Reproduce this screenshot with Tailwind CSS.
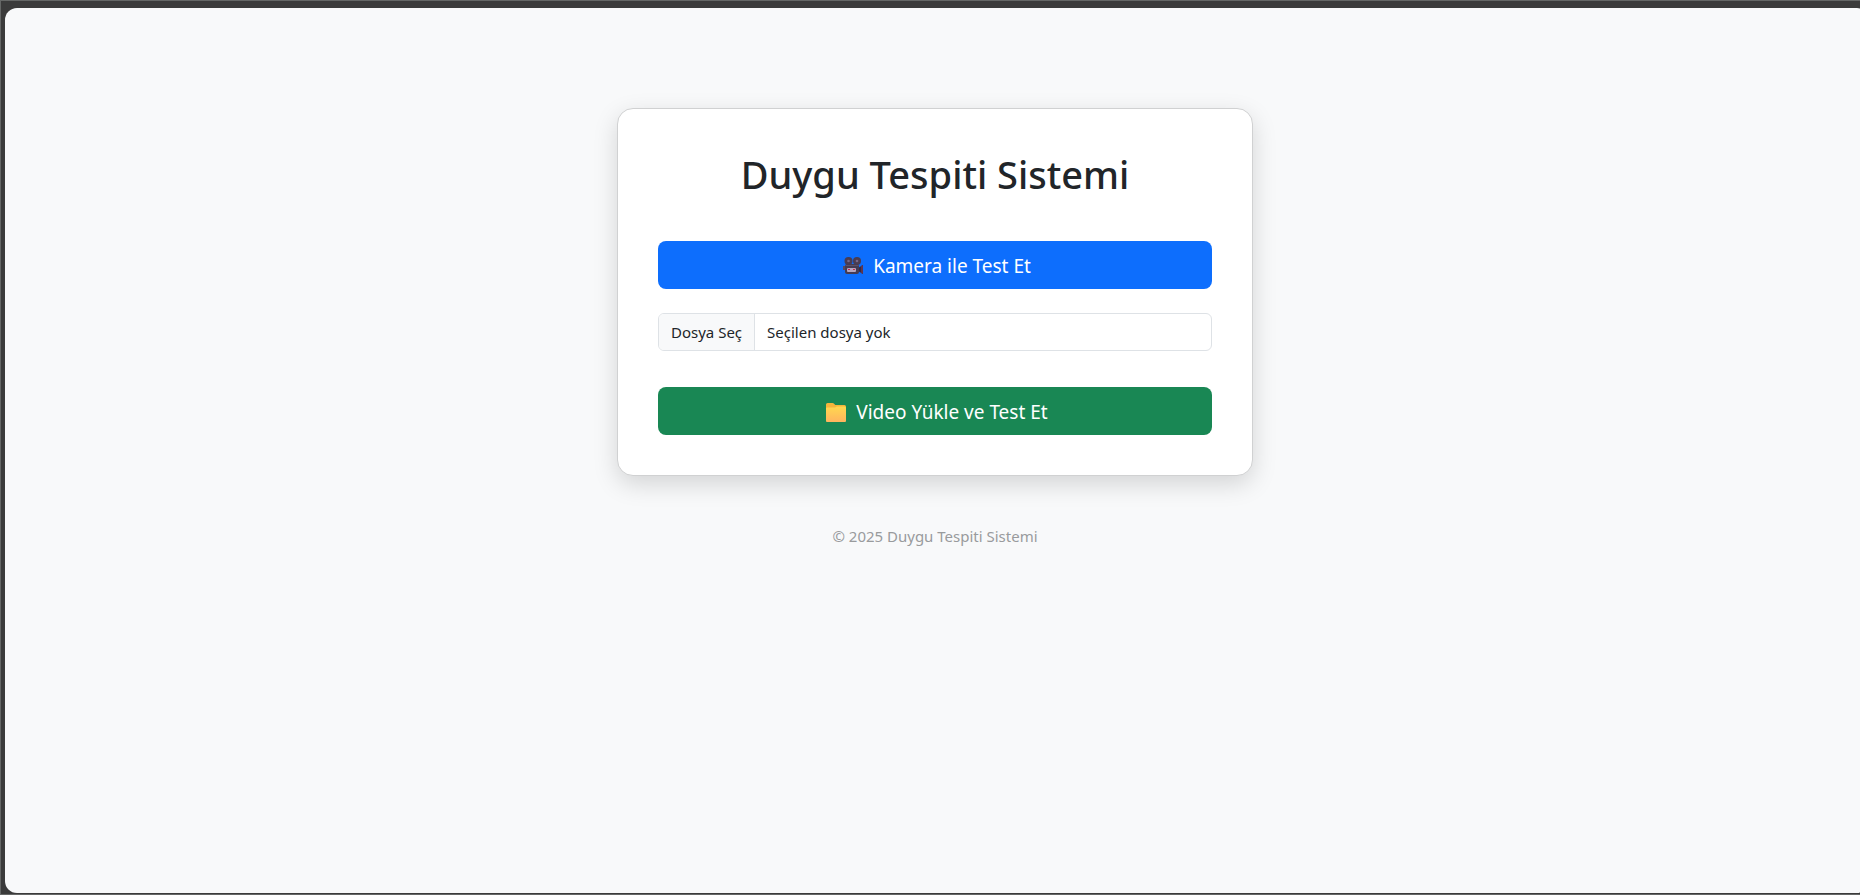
<!DOCTYPE html>
<html lang="tr">
<head>
<meta charset="utf-8">
<meta name="viewport" content="width=device-width, initial-scale=1">
<title>Duygu Tespiti Sistemi</title>
<script src="https://cdn.jsdelivr.net/npm/@tailwindcss/browser@4"></script>
</head>
<body class="flex h-screen overflow-hidden border-t border-b border-l border-[#656766] bg-[#3b3b3b] pt-[7px] pb-px pl-1 font-['Segoe_UI','Noto_Sans','Open_Sans',sans-serif] text-[#212529]">
  <div class="-mr-[5px] flex flex-1 flex-col items-center rounded-l-xl rounded-r-lg bg-[#f8f9fa] px-3 pt-[100px]">
    <main class="w-full max-w-[636px] rounded-2xl border border-[#d0d1d2] bg-white px-10 pt-[41px] pb-10 shadow-[0_8px_24px_rgba(0,0,0,0.15)]">
      <h1 class="mb-[43px] text-center text-[38px] leading-[48px] font-medium">Duygu Tespiti Sistemi</h1>
      <button type="button" class="flex h-12 w-full items-center justify-center gap-2 rounded-lg bg-[#0d6efd] pt-0.5 pl-0.5 text-[19px] text-white">
        <svg class="h-6 w-6" viewBox="0 0 24 24" aria-hidden="true">
          <circle cx="7.500" cy="7" r="4" fill="#493c52"/><circle cx="16" cy="7" r="4" fill="#493c52"/>
          <circle cx="7.500" cy="7" r="1.300" fill="#75688a"/><circle cx="16" cy="7" r="1.300" fill="#75688a"/>
          <path d="M2 12h3v4H2z" fill="#554a63"/>
          <path d="M17 14l5-3v9l-5-3z" fill="#352b42"/><path d="M20 12l2-1v9l-2-1z" fill="#5d3550"/>
          <rect x="4" y="10" width="14" height="10" rx="2" fill="#453b52"/>
          <path d="M4.500 11.500h13" stroke="#5c5068"/>
          <rect x="6" y="14" width="9" height="4" rx="1" fill="#b5a5bd"/>
          <path d="M7 15h2v1H7zM12 15h2v1h-2z" fill="#c72c4c"/>
        </svg>
        <span>Kamera ile Test Et</span>
      </button>
      <form class="mt-6">
        <label class="flex h-[38px] w-full overflow-hidden rounded-md border border-[#dee2e6] text-[15px] leading-9">
          <input type="file" accept="video/*" class="sr-only">
          <span class="border-r border-[#dee2e6] bg-[#f8f9fa] px-3">Dosya Seç</span>
          <span class="px-3">Seçilen dosya yok</span>
        </label>
        <button type="submit" class="mt-9 flex h-12 w-full items-center justify-center gap-2 rounded-lg bg-[#198754] pt-0.5 pl-0.5 text-[19px] text-white">
          <svg class="h-6 w-6" viewBox="0 0 24 24" aria-hidden="true">
            <defs><linearGradient id="folder" x1="0" y1="0" x2="0" y2="1"><stop offset="0" stop-color="#ffd84f"/><stop offset="1" stop-color="#ffb45f"/></linearGradient></defs>
            <path d="M2 4.500q0-1.500 1.500-1.500h5q1 0 1.800 1l1 1H20.500q1.500 0 1.500 1.500v4H2z" fill="#f5b53c"/>
            <path d="M2 8.500q0-1 1-1h7.500q.8 0 1.300-.5t1.200-.5h7.500q1.500 0 1.500 1.500V21q0 1-1 1H3q-1 0-1-1z" fill="url(#folder)"/>
          </svg>
          <span>Video Yükle ve Test Et</span>
        </button>
      </form>
    </main>
    <footer class="mt-12 text-[15px] leading-6 text-[#999b9d]">© 2025 Duygu Tespiti Sistemi</footer>
  </div>
</body>
</html>
